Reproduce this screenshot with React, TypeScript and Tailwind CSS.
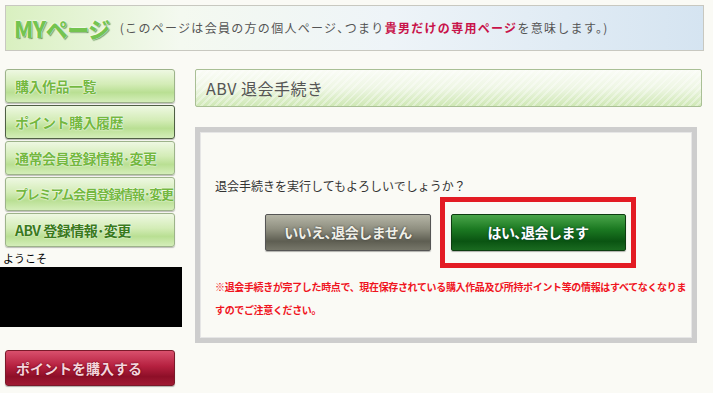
import React from "react";

const jp = "font-['Noto_Sans_CJK_JP','Noto_Sans',sans-serif]";

const menu = [
  { label: "購入作品一覧" },
  { label: "ポイント購入履歴", active: true },
  { label: "通常会員登録情報･変更" },
  { label: "プレミアム会員登録情報･変更", small: true },
  { label: "ABV 登録情報･変更", dark: true },
];

function SideButton({ label, dark, active, small }: { label: string; dark?: boolean; active?: boolean; small?: boolean }) {
  return (
    <div
      className={`h-[34px] w-[170px] rounded-[3px] border flex items-center pl-[9px] bg-[linear-gradient(to_bottom,#eef8e2_0%,#d3ecb6_45%,#b9df93_70%,#d4eeb9_100%)] shadow-[0_1px_1px_rgba(0,0,0,0.25)] ${
        active ? "border-[#4f5f44]" : "border-[#9db38a]"
      }`}
    >
      <span
        className={`font-bold whitespace-nowrap ${small ? "text-[13px] tracking-[-1.2px]" : "text-[14px] tracking-[-0.5px]"} ${
          dark
            ? "text-[#3a7a1c] [text-shadow:0_0_2px_#ffffff]"
            : "text-[#74b840] [text-shadow:0_0_2px_#ffffff,0_0_1px_#ffffff]"
        }`}
      >
        {label}
      </span>
    </div>
  );
}

export default function App() {
  return (
    <div className={`w-[721px] h-[393px] bg-white ${jp}`}>
      <div className="w-[713px] h-[393px] bg-[#fafaf5] pt-[5px] pl-[5px] flex flex-col">
        {/* top banner */}
        <div className="w-[699px] h-[46px] border border-[#c8c8c0] bg-[linear-gradient(to_right,#d9f0c0_0%,#f4f9f0_25%,#eef4f8_55%,#d5e4f1_100%)] flex items-center pl-[8px] gap-[10px]">
          <span className="text-[22px] font-black tracking-[-0.5px] text-[#74c450] [text-shadow:0_0_2px_#ffffff,0_0_2px_#ffffff,1px_1px_1px_#3c7a25]">
            MYページ
          </span>
          <span className="text-[12px] text-[#555] tracking-[1.3px] whitespace-nowrap">
            (このページは会員の方の個人ページ､つまり
            <span className="font-bold text-[#c8134a]">貴男だけの専用ページ</span>
            を意味します。)
          </span>
        </div>

        <div className="flex mt-[18px] gap-[20px]">
          {/* sidebar */}
          <div className="w-[170px] flex flex-col">
            <div className="flex flex-col gap-[2px]">
              {menu.map((m) => (
                <SideButton key={m.label} {...m} />
              ))}
            </div>
            <div className="text-[11px] text-black leading-none mt-[6px] ml-[-2px]">ようこそ</div>
            <div className="w-[182px] h-[60px] bg-black ml-[-5px] mt-[3px]" />
            <div className="mt-[23px] h-[36px] w-[170px] rounded-[3px] border border-[#7a1a2a] bg-[linear-gradient(to_bottom,#d9506d_0%,#b5203f_45%,#8e0f28_75%,#a01a33_100%)] flex items-center pl-[10px] shadow-[0_1px_1px_rgba(0,0,0,0.3)]">
              <span className="text-[14px] font-bold text-[#f5d5dc] [text-shadow:0_0_2px_#5a0010]">ポイントを購入する</span>
            </div>
          </div>

          {/* main */}
          <div className="flex flex-col">
            <div className="w-[507px] h-[38px] border border-[#a9bf95] rounded-[2px] flex items-center pl-[10px] bg-[repeating-linear-gradient(135deg,rgba(255,255,255,0)_0px,rgba(255,255,255,0)_3px,rgba(255,255,255,0.35)_3px,rgba(255,255,255,0.35)_5px),linear-gradient(to_bottom,#fafcf6_0%,#eef6e4_50%,#cfe8b5_100%)]">
              <span className="text-[16px] text-[#555] tracking-[0.5px]">ABV 退会手続き</span>
            </div>

            <div className="mt-[20px] w-[502px] h-[216px] border-[5px] border-[#cdcdcd] bg-[#fafaf5] outline outline-1 outline-[#e6e6e6] -outline-offset-[6px] pl-[15px] pt-[48px]">
              <div className="text-[12px] text-[#333] leading-none">退会手続きを実行してもよろしいでしょうか？</div>

              <div className="flex mt-[5px] items-center">
                <div className="ml-[50px] w-[166px] h-[37px] rounded-[2px] border border-[#555] bg-[linear-gradient(to_bottom,#b5b5a6_0%,#8f8f80_40%,#5e5e52_75%,#77776a_100%)] flex items-center justify-center shadow-[0_1px_1px_rgba(0,0,0,0.3)]">
                  <span className="text-[14px] font-bold tracking-[-0.5px] text-[#f0f0e8] [text-shadow:0_0_2px_#333]">いいえ､退会しません</span>
                </div>
                <div className="ml-[9px] border-[5px] border-[#e31b23] w-[196px] h-[71px] flex items-center justify-center">
                  <div className="w-[175px] h-[37px] rounded-[2px] border border-[#0d3d10] bg-[linear-gradient(to_bottom,#4aa54a_0%,#1c7a22_40%,#0a5412_75%,#1a6a20_100%)] flex items-center justify-center shadow-[0_1px_1px_rgba(0,0,0,0.3)]">
                    <span className="text-[14px] font-bold tracking-[-0.5px] text-white [text-shadow:0_0_2px_#033]">はい､退会します</span>
                  </div>
                </div>
              </div>

              <div className="mt-[7px] text-[10px] font-bold text-[#f0141e] leading-[23px] tracking-[-0.35px]">
                ※退会手続きが完了した時点で、現在保存されている購入作品及び所持ポイント等の情報はすべてなくなりますのでご注意ください。
              </div>
            </div>
          </div>
        </div>
      </div>
    </div>
  );
}
